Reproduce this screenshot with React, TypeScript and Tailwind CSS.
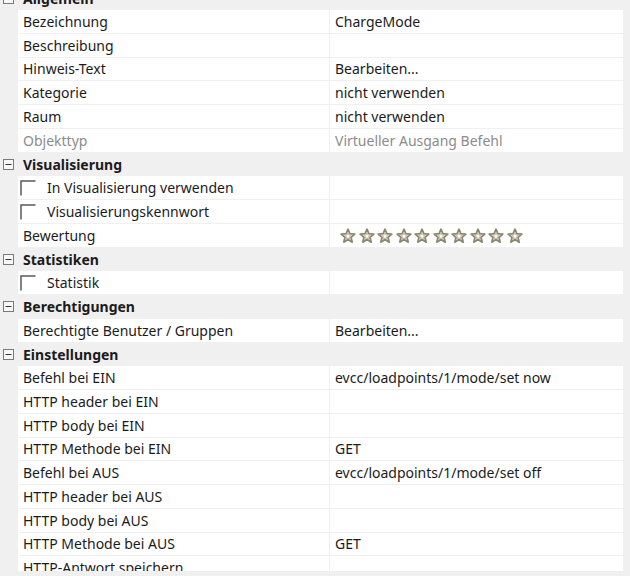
import React from "react";

type Row =
  | { kind: "header"; label: string }
  | { kind: "data"; label: string; value?: string; dim?: boolean }
  | { kind: "check"; label: string }
  | { kind: "stars"; label: string };

const rows: Row[] = [
  { kind: "header", label: "Allgemein" },
  { kind: "data", label: "Bezeichnung", value: "ChargeMode" },
  { kind: "data", label: "Beschreibung" },
  { kind: "data", label: "Hinweis-Text", value: "Bearbeiten..." },
  { kind: "data", label: "Kategorie", value: "nicht verwenden" },
  { kind: "data", label: "Raum", value: "nicht verwenden" },
  { kind: "data", label: "Objekttyp", value: "Virtueller Ausgang Befehl", dim: true },
  { kind: "header", label: "Visualisierung" },
  { kind: "check", label: "In Visualisierung verwenden" },
  { kind: "check", label: "Visualisierungskennwort" },
  { kind: "stars", label: "Bewertung" },
  { kind: "header", label: "Statistiken" },
  { kind: "check", label: "Statistik" },
  { kind: "header", label: "Berechtigungen" },
  { kind: "data", label: "Berechtigte Benutzer / Gruppen", value: "Bearbeiten..." },
  { kind: "header", label: "Einstellungen" },
  { kind: "data", label: "Befehl bei EIN", value: "evcc/loadpoints/1/mode/set now" },
  { kind: "data", label: "HTTP header bei EIN" },
  { kind: "data", label: "HTTP body bei EIN" },
  { kind: "data", label: "HTTP Methode bei EIN", value: "GET" },
  { kind: "data", label: "Befehl bei AUS", value: "evcc/loadpoints/1/mode/set off" },
  { kind: "data", label: "HTTP header bei AUS" },
  { kind: "data", label: "HTTP body bei AUS" },
  { kind: "data", label: "HTTP Methode bei AUS", value: "GET" },
  { kind: "data", label: "HTTP-Antwort speichern" },
];

function Expander() {
  return (
    <svg width="11" height="11" viewBox="0 0 11 11" className="shrink-0">
      <rect x="0.5" y="0.5" width="10" height="10" fill="#f7f7f7" stroke="#7a7a7a" />
      <line x1="2.5" y1="5.5" x2="8.5" y2="5.5" stroke="#3a3a3a" />
    </svg>
  );
}

function Check() {
  return (
    <svg width="16" height="16" viewBox="0 0 16 16" className="shrink-0">
      <path d="M1 15.5 V1 H15.5" fill="none" stroke="#5a5a5a" strokeWidth="1.5" />
    </svg>
  );
}

function Star() {
  return (
    <svg width="16" height="16" viewBox="0 0 24 24" className="shrink-0">
      <defs>
        <linearGradient id="sg" x1="0" y1="0" x2="0" y2="1">
          <stop offset="0" stopColor="#f4f2ea" />
          <stop offset="1" stopColor="#d9d4c2" />
        </linearGradient>
      </defs>
      <path
        d="M12 1.8 L14.9 8.6 L22.2 9.2 L16.6 14 L18.3 21.2 L12 17.4 L5.7 21.2 L7.4 14 L1.8 9.2 L9.1 8.6 Z"
        fill="url(#sg)"
        stroke="#8d876f"
        strokeWidth="2.6"
        strokeLinejoin="round"
      />
      <path
        d="M12 7.5 L13.3 10.6 L16.6 10.9 L14.1 13.1 L14.9 16.3 L12 14.6 L9.1 16.3 L9.9 13.1 L7.4 10.9 L10.7 10.6 Z"
        fill="#ffffff"
        stroke="#b5ae96"
        strokeWidth="1"
      />
    </svg>
  );
}

function RowView({ row }: { row: Row }) {
  if (row.kind === "header") {
    return (
      <div className="flex h-[23.75px] items-center">
        <div className="flex w-[18px] shrink-0 justify-start pl-[3px]">
          <Expander />
        </div>
        <div className="pl-[5px] pt-[1px] font-bold text-[#1b1b1b]">{row.label}</div>
      </div>
    );
  }
  return (
    <div className="flex h-[23.75px]">
      <div className="w-[18px] shrink-0" />
      <div className="mr-[7px] flex flex-1 border-b border-[#f0f0f0] bg-white">
        <div className="flex w-[312px] shrink-0 items-center border-r border-[#f0f0f0] pl-[5px]">
          {row.kind === "check" ? (
            <div className="flex items-center">
              <div className="ml-[-3px] mt-[1px]">
                <Check />
              </div>
              <span className="pl-[11px] pt-[1px] text-[#1b1b1b]">{row.label}</span>
            </div>
          ) : (
            <span
              className={
                row.kind === "data" && row.dim
                  ? "pt-[1px] text-[#8c8c8c]"
                  : "pt-[1px] text-[#1b1b1b]"
              }
            >
              {row.label}
            </span>
          )}
        </div>
        <div className="flex flex-1 items-center pl-[5px]">
          {row.kind === "stars" ? (
            <div className="flex gap-[2.5px] pl-[5px] pt-[1px]">
              {Array.from({ length: 10 }).map((_, i) => (
                <Star key={i} />
              ))}
            </div>
          ) : row.kind === "data" && row.value ? (
            <span className={row.dim ? "pt-[1px] text-[#8c8c8c]" : "pt-[1px] text-[#1b1b1b]"}>
              {row.value}
            </span>
          ) : null}
        </div>
      </div>
    </div>
  );
}

export default function App() {
  return (
    <div className="h-[576px] w-[630px] overflow-hidden bg-[#f0f0f0] font-['Segoe_UI','Noto_Sans',sans-serif] text-[14px] leading-none">
      <div className="h-[571px] overflow-hidden">
        <div className="mt-[-13.75px] flex flex-col">
          {rows.map((r, i) => (
            <RowView key={i} row={r} />
          ))}
        </div>
      </div>
    </div>
  );
}
